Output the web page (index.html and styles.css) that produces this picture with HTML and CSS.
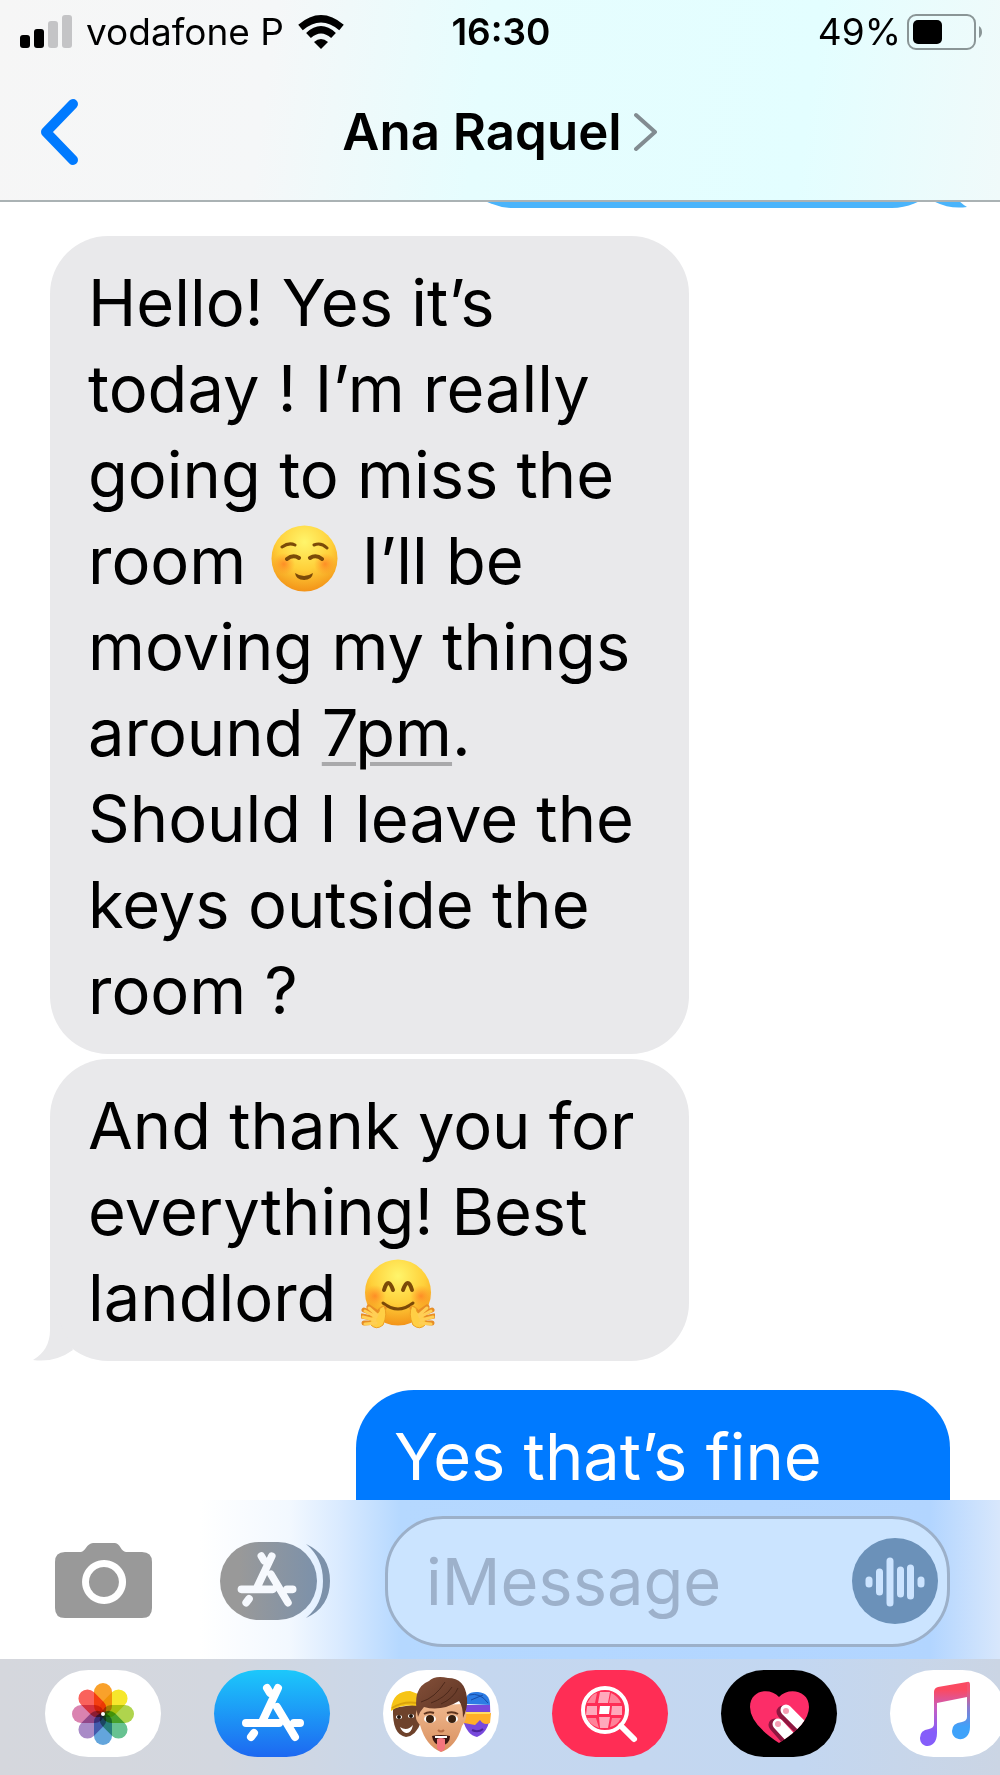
FILE: index.html
```html
<!DOCTYPE html>
<html lang="en">
<head>
<meta charset="utf-8">
<meta name="viewport" content="width=device-width, initial-scale=1">
<title>Ana Raquel</title>
<link rel="stylesheet" href="styles.css">
</head>
<body>
<header class="header">
  <div class="status">
    <div class="status-left">
      <svg class="signal" viewBox="0 0 52 34" aria-label="Signal"><rect y="20" width="10" height="13" rx="3"/><rect x="14" y="14" width="10" height="19" rx="3"/><g fill="#c4c4c6"><rect x="28" y="6" width="10" height="27" rx="3"/><rect x="42" width="10" height="33" rx="3"/></g></svg>
      <span>vodafone P</span>
      <svg class="wifi" viewBox="0 0 46 34" aria-label="Wi-Fi"><g fill="none" stroke="#000" stroke-width="7"><path d="M2.500 12.500Q23-5 43.500 12.500"/><path d="M10.500 20.500Q23 9 35.500 20.500"/></g><path d="M16 27Q23 21 30 27L23 34Z"/></svg>
    </div>
    <time class="clock">16:30</time>
    <div class="status-right">
      <span>49%</span>
      <svg class="battery" viewBox="0 0 75 36" aria-label="Battery"><rect x="1" y="1" width="67" height="34" rx="8" fill="none" stroke="#8a9596" stroke-width="2"/><rect x="6" y="6" width="29" height="24" rx="5"/><path d="M72 12Q75 14 75 18Q75 22 72 24Z" fill="#8a9596"/></svg>
    </div>
  </div>
  <nav class="nav">
    <button class="back" aria-label="Back"><svg viewBox="0 0 38 66"><path d="M33 5L6 33L33 61" fill="none" stroke="#007aff" stroke-width="10" stroke-linecap="round" stroke-linejoin="round"/></svg></button>
    <a class="contact" href="#contact">Ana Raquel <svg viewBox="0 0 24 40"><path d="M2 3L21 20L2 37" fill="none" stroke="#828c91" stroke-width="4" stroke-linecap="round" stroke-linejoin="round"/></svg></a>
  </nav>
</header>

<main class="thread">
  <div class="bubble sent earlier"><svg class="tail" viewBox="0 0 40 60"><path d="M23 0V28Q23 48 40 58Q18 61 0 48Z"/></svg></div>
  <p class="bubble received first">Hello! Yes it’s today ! I’m really going to miss the room <svg class="emoji smile" viewBox="0 0 67 67" role="img" aria-label="smiling face">
    <defs>
      <radialGradient id="face" cx=".5" cy=".25" r=".75"><stop offset="0" stop-color="#fff56b"/><stop offset=".55" stop-color="#ffd03a"/><stop offset="1" stop-color="#f39318"/></radialGradient>
      <radialGradient id="cheek"><stop offset="0" stop-color="#ff7a21" stop-opacity=".75"/><stop offset="1" stop-color="#ff8a21" stop-opacity="0"/></radialGradient>
    </defs>
    <circle cx="33.500" cy="33.500" r="33" fill="url(#face)"/>
    <circle cx="13" cy="39" r="11" fill="url(#cheek)"/><circle cx="54" cy="39" r="11" fill="url(#cheek)"/>
    <g fill="none" stroke="#7b4a08" stroke-width="3" stroke-linecap="round"><path d="M11 22Q18 17 24 20M43 20Q50 17 56 23"/><path d="M16 34Q22 29 28 33M39 33Q45 29 51 34" stroke-width="4"/></g>
    <path d="M24 48Q33 54 42 48Q41 55 33 55Q25 55 24 48Z" fill="#7b4a08"/>
  </svg> I’ll be moving my things around <a class="time-link" href="#event">7pm</a>. Should I leave the keys outside the room ?</p>
  <p class="bubble received second">And thank you for everything! Best landlord <svg class="emoji hug" viewBox="0 0 74 70" role="img" aria-label="hugging face">
    <circle cx="37" cy="33.500" r="33" fill="url(#face)"/>
    <circle cx="14" cy="37" r="11" fill="url(#cheek)"/><circle cx="60" cy="37" r="11" fill="url(#cheek)"/>
    <g fill="none" stroke="#7b4a08" stroke-width="4" stroke-linecap="round"><path d="M23 31Q27 17 32 31M42 31Q47 17 51 31"/><path d="M22 44Q37 56 52 44" stroke-width="3"/></g>
    <g id="hand"><path d="M23 49Q18 51 18 55L8 48M16 56L3 51M15 60L1 57M16 63L3 64" fill="none" stroke="#e88d25" stroke-width="5" stroke-linecap="round"/><path d="M23 47Q27 55 22 66Q15 72 9 65L12 54Q18 57 19 49Z" fill="#ffcf45" stroke="#eda022"/><path d="M16 56L8 49M15 58L4 52M14 61L2 58M15 64L4 65" fill="none" stroke="#ffcf55" stroke-width="3" stroke-linecap="round"/></g>
    <use href="#hand" transform="translate(74 0) scale(-1 1)"/>
  </svg><svg class="tail" viewBox="0 0 40 60"><path d="M17 0V28Q17 48 0 58Q22 61 40 48Z"/></svg></p>
  <p class="bubble sent latest">Yes that’s fine</p>
</main>

<footer>
  <form class="composer">
    <button class="camera" type="button" aria-label="Camera"><svg viewBox="0 0 97 76"><path fill-rule="evenodd" d="M10 9H26C30 9 32 0 38 0H60C65 0 66 9 71 9H87Q97 9 97 19V65Q97 75 87 75H10Q0 75 0 65V19Q0 9 10 9ZM49 17a22 22 0 1 0 .1 0ZM49 24a15 15 0 1 1-.1 0Z" fill="#999"/></svg></button>
    <button class="apps" type="button" aria-label="Apps"><svg viewBox="0 0 110 78">
      <defs><linearGradient id="slate"><stop offset=".2" stop-color="#999"/><stop offset="1" stop-color="#7c91aa"/></linearGradient></defs>
      <rect width="97" height="78" rx="39" fill="url(#slate)"/><path d="M86 2Q110 13 110 39Q110 65 86 76Q103 62 103 39Q103 16 86 2Z" fill="#7c91aa"/>
      <g transform="translate(-9 -3) scale(.95)" fill="none" stroke="#f6f9fe" stroke-width="8" stroke-linecap="round"><path d="M64 18L48 52M53 18L56 23M32 53H65M63 37L81 67M80 53H86M40 63L37 67"/></g></svg></button>
    <label class="field"><input type="text" placeholder="iMessage" aria-label="iMessage">
      <button class="audio" type="button" aria-label="Record audio"><svg viewBox="0 0 86 86"><circle cx="43" cy="43" r="43" fill="#6b91b9"/><g stroke="#cce4ff" stroke-width="7" stroke-linecap="round"><path d="M17 42V46M27.500 34V54M38 23V65M48.500 32V56M58.500 30V58M69 42V46"/></g></svg></button></label>
  </form>
  <nav class="dock" aria-label="iMessage apps">
    <button class="app photos" aria-label="Photos"><svg viewBox="0 0 116 87">
      <rect class="petal" x="49" y="13" width="18" height="32" rx="9" fill="#f9a12b"/>
      <rect class="petal" x="49" y="13" width="18" height="32" rx="9" fill="#f6e72c" transform="rotate(45 58 44)"/>
      <rect class="petal" x="49" y="13" width="18" height="32" rx="9" fill="#afd44d" transform="rotate(90 58 44)"/>
      <rect class="petal" x="49" y="13" width="18" height="32" rx="9" fill="#67c291" transform="rotate(135 58 44)"/>
      <rect class="petal" x="49" y="13" width="18" height="32" rx="9" fill="#63a5dc" transform="rotate(180 58 44)"/>
      <rect class="petal" x="49" y="13" width="18" height="32" rx="9" fill="#a98bc7" transform="rotate(225 58 44)"/>
      <rect class="petal" x="49" y="13" width="18" height="32" rx="9" fill="#da83b0" transform="rotate(270 58 44)"/>
      <rect class="petal" x="49" y="13" width="18" height="32" rx="9" fill="#fa625c" transform="rotate(315 58 44)"/>
      <circle cx="58" cy="44" r="2" fill="#fff"/></svg></button>
    <button class="app store" aria-label="App Store"><svg viewBox="0 0 116 87"><g fill="none" stroke="#fff" stroke-width="8" stroke-linecap="round"><path d="M64 18L48 52M53 18L56 23M32 53H65M63 37L81 67M80 53H86M40 63L37 67"/></g></svg></button>
    <button class="app memoji" aria-label="Memoji"><svg viewBox="0 0 116 87">
      <defs><linearGradient id="hair" x2="1" y2="1"><stop offset="0" stop-color="#845039"/><stop offset="1" stop-color="#583021"/></linearGradient><linearGradient id="skin" x2="0" y2="1"><stop offset="0" stop-color="#efb78d"/><stop offset="1" stop-color="#d9905f"/></linearGradient></defs>
      <path d="M10 38Q9 65 23 67Q33 66 38 52L36 34Z" fill="#6e422b"/><path d="M8 39Q10 21 27 21L35 24V36Q18 34 8 41Z" fill="#f6c416"/><path d="M9 38Q20 31 34 33" fill="none" stroke="#d9a30d" stroke-width="2"/>
      <ellipse cx="16" cy="47" rx="3" ry="2" fill="#fff"/><ellipse cx="28" cy="46" rx="3" ry="2" fill="#fff"/><circle cx="16" cy="47" r="2" fill="#22130c"/><circle cx="28" cy="46" r="2" fill="#22130c"/><path d="M17 57Q24 62 30 55Q28 64 23 63Q19 62 17 57Z" fill="#fff"/>
      <path d="M82 35H107Q109 61 94 67Q84 65 80 50Z" fill="#7849dc"/><path d="M83 34Q81 21 95 22Q107 23 107 35Z" fill="#2d7ce4"/><path d="M86 25Q97 22 105 33M88 30L100 25" stroke="#174da8" fill="none"/><path d="M81 43Q97 45 108 43L107 53Q101 56 97 50L92 55L81 53Z" fill="#ffaf29"/><path d="M82 43L107 43" stroke="#ffdc62" stroke-width="2"/><path d="M89 60Q95 63 100 59" stroke="#4c259d" stroke-width="2" fill="none"/>
      <path d="M36 36Q29 47 37 55Q43 76 58 82Q73 77 79 56Q87 46 80 34Z" fill="url(#skin)"/>
      <path d="M35 47Q28 18 46 11Q52 5 65 8Q82 8 84 28Q85 37 80 48Q80 36 76 31Q58 42 41 37Q37 41 35 47Z" fill="url(#hair)"/><path d="M38 32Q52 28 62 12M48 33Q62 28 69 17M58 34Q71 28 75 18" fill="none" stroke="#4d291b"/>
      <path d="M41 44Q46 41 51 43M64 43Q70 41 75 44" fill="none" stroke="#60351e" stroke-width="2"/><ellipse cx="47" cy="49" rx="6" ry="4" fill="#fff"/><ellipse cx="69" cy="49" rx="6" ry="4" fill="#fff"/><circle cx="47" cy="49" r="4" fill="#38200f"/><circle cx="69" cy="49" r="4" fill="#38200f"/><path d="M55 60Q58 63 61 60" fill="none" stroke="#b66b43" stroke-width="2"/><path d="M49 66Q58 64 67 66Q67 74 58 76Q50 74 49 66Z" fill="#3b1712"/><path d="M52 67H64" stroke="#fff" stroke-width="2"/><path d="M54 69Q58 67 62 69V78Q58 85 54 78Z" fill="#f4747e"/></svg></button>
    <button class="app images" aria-label="Images"><svg viewBox="0 0 116 87"><g fill="#ffa9bb"><path d="M37 30Q40 24 45 23L43 33H35ZM59 23Q66 26 69 33H57ZM35 48H44L47 58Q38 55 35 48ZM60 48H69Q65 56 58 57Z" fill="#ff8399"/><path d="M48 22H58L56 33H46ZM35 36H45V45H34ZM60 36H70V45H59ZM47 47H58L56 58H48Z"/><path d="M48 36H58L57 44H47Z" fill="#fff"/></g><circle cx="53" cy="40" r="22" fill="none" stroke="#fff" stroke-width="4"/><path d="M69 56L82 69" stroke="#fff" stroke-width="6" stroke-linecap="round"/></svg></button>
    <button class="app touch" aria-label="Digital Touch"><svg viewBox="0 0 116 87"><defs><clipPath id="heart"><path d="M58 73Q29 54 29 37C29 20 49 17 58 27C67 17 88 20 88 37Q88 54 58 73Z"/></clipPath></defs><g clip-path="url(#heart)"><rect width="116" height="87" fill="#fc2d68"/><path d="M54 55L76 80M62 42L90 69" stroke="#8e1740" stroke-width="13" stroke-linecap="round"/><path d="M57 54L79 78M65 40L92 67" stroke="#fff" stroke-width="11" stroke-linecap="round"/><circle cx="57" cy="54" r="3" fill="#f59cb2"/><circle cx="65" cy="41" r="3" fill="#f59cb2"/></g></svg></button>
    <button class="app music" aria-label="Music"><svg viewBox="0 0 116 87"><defs><linearGradient id="note" gradientUnits="userSpaceOnUse" x1="58" y1="14" x2="58" y2="74"><stop offset=".1" stop-color="#fa4a62"/><stop offset=".4" stop-color="#c75ec1"/><stop offset=".8" stop-color="#855dfa"/></linearGradient><linearGradient id="stem" gradientUnits="userSpaceOnUse" x1="70" y1="12" x2="70" y2="68"><stop offset=".15" stop-color="#f45372"/><stop offset=".45" stop-color="#8c79cc"/><stop offset=".8" stop-color="#3fa2fa"/></linearGradient></defs>
      <path d="M44 22Q44 18 48 17L77 12V27L47 33V63C47 80 30 79 30 68Q30 60 39 59Q44 58 44 54Z" fill="url(#note)"/><path d="M77 12Q80 11 80 15V57C80 73 62 72 62 61Q62 53 72 52Q77 51 77 47Z" fill="url(#stem)"/></svg></button>
  </nav>
</footer>
</body>
</html>
```
FILE: styles.css
```css
* { box-sizing: border-box; }

body {
  margin: 0;
  height: 100vh;
  display: flex;
  flex-direction: column;
  overflow: hidden;
  background: #fff;
  color: #000;
  font-family: Inter, "Liberation Sans", sans-serif;
}

svg { display: block; }
button { padding: 0; border: 0; background: none; flex: none; }
a { color: inherit; text-decoration: none; }

/* Status bar and title */
.header {
  flex: none;
  border-bottom: 2px solid #aab2b4;
  background: linear-gradient(98deg, #f6f6f6 0%, #f5f7f8 27%, #e6fdfe 48%, #e3feff 80%, #f0fafa 100%);
}
.status {
  display: grid;
  grid-template-columns: 1fr auto 1fr;
  align-items: center;
  height: 64px;
  padding: 0 18px 0 20px;
  font-size: 37px;
  line-height: 40px;
}
.status-left, .status-right { display: flex; align-items: center; }
.status-left { gap: 14px; }
.status-right { justify-content: flex-end; gap: 6px; }
.signal { width: 52px; height: 34px; }
.wifi { width: 46px; height: 34px; }
.battery { width: 75px; height: 36px; }
.clock { font-weight: 600; }
.nav {
  display: grid;
  grid-template-columns: 1fr auto 1fr;
  align-items: center;
  height: 136px;
  padding: 0 40px;
}
.back svg { width: 38px; height: 66px; }
.contact {
  display: flex;
  align-items: center;
  gap: 12px;
  font-size: 51px;
  line-height: 64px;
  font-weight: 600;
}
.contact svg { width: 24px; height: 40px; }

/* Messages */
.thread {
  flex: 1;
  min-height: 0;
  overflow: hidden;
  display: flex;
  flex-direction: column;
  padding: 0 50px;
}
.bubble {
  position: relative;
  flex: none;
  width: 71%;
  margin: 0;
  padding: 24px 38px 20px;
  border-radius: 58px;
  font-size: 65px;
  line-height: 86px;
}
.received { background: #e9e9eb; }
.sent { align-self: flex-end; background: #007aff; color: #fff; }
.earlier { width: 55%; height: 130px; margin-top: -124px; background: #4ab4fb; }
.first { margin-top: 28px; }
.second { margin-top: 5px; }
.latest { width: 66%; min-height: 216px; margin-top: 29px; }
.tail { position: absolute; bottom: -1px; width: 40px; height: 60px; }
.received .tail { left: -17px; fill: #e9e9eb; }
.sent .tail { right: -17px; fill: #4ab4fb; }
.emoji { display: inline-block; vertical-align: -8px; }
.smile { width: 67px; height: 67px; margin: 0 6px; }
.hug { width: 74px; height: 70px; margin-left: 6px; }
.time-link {
  text-decoration: underline;
  text-decoration-color: #a9a9ab;
  text-decoration-thickness: 4px;
  text-underline-offset: 6px;
}

/* Message box */
footer { flex: none; }
.composer {
  display: flex;
  align-items: center;
  height: 159px;
  padding: 3px 50px 0 55px;
  background: linear-gradient(90deg, #fff 20%, #f2f8ff 29%, #d9eaff 34%, #b5d8ff 40%, #b2d5ff 93%, #d8e7fc 100%);
}
.camera svg { width: 97px; height: 76px; }
.apps { margin: 0 55px 0 68px; }
.apps svg { width: 110px; height: 78px; }
.field {
  flex: 1;
  min-width: 0;
  display: flex;
  align-items: center;
  height: 131px;
  padding: 0 9px 0 38px;
  border: 3px solid #9cb0c9;
  border-radius: 58px;
  background: #cbe4ff;
}
.field input {
  flex: 1;
  min-width: 0;
  height: 90px;
  padding: 0;
  border: 0;
  outline: 0;
  background: none;
  color: #000;
  font: 65px/86px Inter, "Liberation Sans", sans-serif;
}
.field input::placeholder { color: #9db1cb; opacity: 1; }
.audio svg { width: 86px; height: 86px; }

/* App strip */
.dock {
  display: flex;
  gap: 53px;
  height: 116px;
  padding: 11px 0 0 45px;
  overflow: hidden;
  background: linear-gradient(90deg, #d5d7dd 0%, #d3d7df 22%, #c5d7ef 48%, #c3d7f1 80%, #cbd5e4 100%);
}
.app {
  width: 116px;
  height: 87px;
  border-radius: 44px;
  overflow: hidden;
  background: #fff;
}
.app svg { width: 116px; height: 87px; }
.petal { mix-blend-mode: multiply; }
.store { background: linear-gradient(#1cc8fb, #1d68f1); }
.images { background: #ff2d55; }
.touch { background: #000; }
```
